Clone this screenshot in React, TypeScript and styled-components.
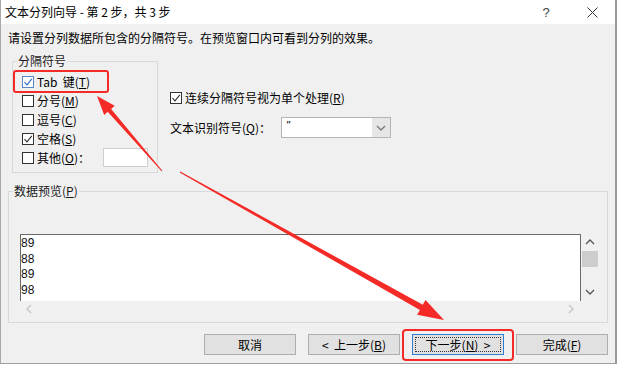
import React from "react"
import styled, { createGlobalStyle } from "styled-components"

const GlobalStyle = createGlobalStyle`
  html, body {
    margin: 0;
    padding: 0;
    background: #ffffff;
  }
  body {
    font-family: "Noto Sans CJK SC", "Liberation Sans", sans-serif;
    font-size: 12px;
    color: #000;
  }
`

const RED = "#f42a26"

type Pt = [number, number]

const arrowPoints = (from: Pt, to: Pt, w0: number, w1: number, headLen: number, headHalf: number) => {
  const dx = to[0] - from[0]
  const dy = to[1] - from[1]
  const len = Math.hypot(dx, dy)
  const ux = dx / len
  const uy = dy / len
  const nx = -uy
  const ny = ux
  const bx = to[0] - ux * headLen
  const by = to[1] - uy * headLen
  const pts: Pt[] = [
    [from[0] + (nx * w0) / 2, from[1] + (ny * w0) / 2],
    [bx + (nx * w1) / 2, by + (ny * w1) / 2],
    [bx + nx * headHalf, by + ny * headHalf],
    to,
    [bx - nx * headHalf, by - ny * headHalf],
    [bx - (nx * w1) / 2, by - (ny * w1) / 2],
    [from[0] - (nx * w0) / 2, from[1] - (ny * w0) / 2],
  ]
  return pts.map((p) => `${p[0].toFixed(1)},${p[1].toFixed(1)}`).join(" ")
}

const CheckBox: React.FC<{ checked?: boolean; accent?: boolean }> = ({ checked, accent }) => (
  <Box $accent={accent}>
    {checked && (
      <svg width="10" height="10" viewBox="0 0 10 10">
        <path d="M1.5 5.2 L4 7.8 L8.8 1.8" fill="none" stroke={accent ? "#2f6fd0" : "#333"} strokeWidth="1.1" />
      </svg>
    )}
  </Box>
)

const Chevron: React.FC<{ dir: "up" | "down" | "left" | "right"; color?: string }> = ({ dir, color = "#555" }) => {
  const d = {
    up: "M1 6 L5 2 L9 6",
    down: "M1 2 L5 6 L9 2",
    left: "M6 1 L2 5 L6 9",
    right: "M2 1 L6 5 L2 9",
  }[dir]
  const vertical = dir === "up" || dir === "down"
  return (
    <svg width={vertical ? 10 : 8} height={vertical ? 8 : 10} viewBox={vertical ? "0 0 10 8" : "0 0 8 10"}>
      <path d={d} fill="none" stroke={color} strokeWidth="1.3" />
    </svg>
  )
}

const separators = [
  { label: "分号", key: "M", checked: false },
  { label: "逗号", key: "C", checked: false },
  { label: "空格", key: "S", checked: true },
]

const previewRows = ["89", "88", "89", "98"]

const App: React.FC = () => {
  return (
    <>
      <GlobalStyle />
      <Window>
        <TitleBar>
          <TitleText>文本分列向导 - 第 2 步，共 3 步</TitleText>
          <TitleButton>?</TitleButton>
          <TitleButton>
            <svg width="11" height="11" viewBox="0 0 11 11">
              <path d="M0.5 0.5 L10.5 10.5 M10.5 0.5 L0.5 10.5" stroke="#333" strokeWidth="1" />
            </svg>
          </TitleButton>
        </TitleBar>

        <Body>
          <Instruction>请设置分列数据所包含的分隔符号。在预览窗口内可看到分列的效果。</Instruction>

          <TopRow>
            <SepGroup>
              <Legend>分隔符号</Legend>
              <GroupInner>
                <TabRow>
                  <Highlight $inset="-2px -19px -2px -9px" $radius={3} />
                  <CheckBox checked accent />
                  <span>
                    Tab&nbsp; 键(<U>T</U>)
                  </span>
                </TabRow>
                {separators.map((s) => (
                  <OptionRow key={s.key}>
                    <CheckBox checked={s.checked} />
                    <span>
                      {s.label}(<U>{s.key}</U>)
                    </span>
                  </OptionRow>
                ))}
                <OptionRow>
                  <CheckBox />
                  <span>
                    其他(<U>O</U>)：
                  </span>
                  <OtherInput />
                </OptionRow>
              </GroupInner>
            </SepGroup>

            <RightOptions>
              <OptionRow>
                <CheckBox checked />
                <span>
                  连续分隔符号视为单个处理(<U>R</U>)
                </span>
              </OptionRow>
              <QualifierRow>
                <QualifierLabel>
                  文本识别符号(<U>Q</U>)：
                </QualifierLabel>
                <Combo>
                  <ComboValue>"</ComboValue>
                  <ComboButton>
                    <Chevron dir="down" color="#777" />
                  </ComboButton>
                </Combo>
              </QualifierRow>
            </RightOptions>
          </TopRow>

          <PreviewGroup>
            <Legend>
              数据预览(<U>P</U>)
            </Legend>
            <PreviewInner>
              <PreviewFrame>
                <PreviewBox>
                  {previewRows.map((r, i) => (
                    <PreviewLine key={i}>{r}</PreviewLine>
                  ))}
                </PreviewBox>
                <VScroll>
                  <Chevron dir="up" />
                  <Thumb />
                  <Spacer />
                  <Chevron dir="down" />
                </VScroll>
                <HScroll>
                  <Chevron dir="left" color="#c4c4c4" />
                  <Chevron dir="right" color="#c4c4c4" />
                </HScroll>
              </PreviewFrame>
            </PreviewInner>
          </PreviewGroup>

          <ButtonRow>
            <Button>取消</Button>
            <Button>
              &lt;&nbsp; 上一步(<U>B</U>)
            </Button>
            <ButtonSlot>
              <Highlight $inset="-5px -10px -6px -10px" $radius={4} />
              <Button $focused>
                <FocusRing>
                  下一步(<U>N</U>)&nbsp; &gt;
                </FocusRing>
              </Button>
            </ButtonSlot>
            <Button>
              完成(<U>F</U>)
            </Button>
          </ButtonRow>
        </Body>

        <ArrowLayer width="620" height="367" viewBox="0 0 620 367">
          <polygon points={arrowPoints([162, 171], [97, 96], 1, 4.5, 19, 7)} fill={RED} />
          <polygon points={arrowPoints([180, 172], [444, 320], 1.2, 6, 26, 8.5)} fill={RED} />
        </ArrowLayer>
      </Window>
    </>
  )
}

const Window = styled.div`
  position: relative;
  width: 617px;
  height: 364px;
  box-sizing: border-box;
  background: #f0f0f0;
  border-left: 1px solid #a8a8a8;
  border-right: 2px solid #9a9a9a;
  border-bottom: 1px solid #a0a0a0;
  display: flex;
  flex-direction: column;
`

const TitleBar = styled.div`
  height: 24px;
  flex: none;
  display: flex;
  align-items: center;
  background: #ffffff;
  padding-left: 4px;
`

const TitleText = styled.div`
  flex: 1;
  font-size: 12px;
  line-height: 16px;
`

const TitleButton = styled.div`
  width: 46px;
  height: 24px;
  display: flex;
  align-items: center;
  justify-content: center;
  font-family: "Liberation Sans", sans-serif;
  font-size: 13px;
  color: #444;
`

const Body = styled.div`
  flex: 1;
  display: flex;
  flex-direction: column;
  padding: 6px 7px 0 7px;
`

const Instruction = styled.div`
  line-height: 16px;
  height: 16px;
`

const TopRow = styled.div`
  display: flex;
  margin-top: 7px;
`

const Group = styled.fieldset`
  margin: 0;
  padding: 0;
  border: 1px solid #d9d9d9;
  min-width: 0;
`

const SepGroup = styled(Group)`
  width: 146px;
  box-sizing: border-box;
  margin-left: 4px;
`

const Legend = styled.legend`
  margin-left: 4px;
  padding: 0 1px;
  line-height: 16px;
  color: #1a1a1a;
`

const GroupInner = styled.div`
  display: flex;
  flex-direction: column;
  padding: 3px 9px 5px 9px;
`

const OptionRow = styled.div`
  position: relative;
  display: flex;
  align-items: center;
  gap: 3px;
  height: 19px;
  line-height: 16px;
  white-space: nowrap;
`

const TabRow = styled(OptionRow)`
  align-self: flex-start;
`

const Box = styled.span<{ $accent?: boolean }>`
  width: 12px;
  height: 12px;
  box-sizing: border-box;
  flex: none;
  background: #fff;
  border: 1px solid ${(p) => (p.$accent ? "#5a86c8" : "#333")};
  display: flex;
  align-items: center;
  justify-content: center;
`

const U = styled.span`
  text-decoration: underline;
`

const OtherInput = styled.div`
  margin-left: auto;
  width: 45px;
  height: 19px;
  box-sizing: border-box;
  background: #fff;
  border: 1px solid #cfcfcf;
`

const Highlight = styled.div<{ $inset: string; $radius: number }>`
  position: absolute;
  inset: ${(p) => p.$inset};
  border: 2px solid ${RED};
  border-radius: ${(p) => p.$radius}px;
  pointer-events: none;
  z-index: 2;
`

const RightOptions = styled.div`
  display: flex;
  flex-direction: column;
  margin-left: 12px;
  padding-top: 35px;
  gap: 10px;
`

const QualifierRow = styled.div`
  display: flex;
  align-items: center;
  height: 21px;
`

const QualifierLabel = styled.span`
  width: 111px;
  line-height: 16px;
  white-space: nowrap;
`

const Combo = styled.div`
  width: 110px;
  height: 21px;
  box-sizing: border-box;
  display: flex;
  background: #fff;
  border: 1px solid #b4b4b4;
`

const ComboValue = styled.span`
  flex: 1;
  padding-left: 4px;
  font-family: "Liberation Sans", sans-serif;
  font-size: 11px;
  line-height: 14px;
  font-style: italic;
`

const ComboButton = styled.span`
  width: 18px;
  background: #e6e6e6;
  display: flex;
  align-items: center;
  justify-content: center;
`

const PreviewGroup = styled(Group)`
  margin-top: 10px;
`

const PreviewInner = styled.div`
  padding: 35px 10px 5px 11px;
`

const PreviewFrame = styled.div`
  display: grid;
  grid-template-columns: 561px 17px;
  grid-template-rows: 67px 16px;
`

const PreviewBox = styled.div`
  background: #fff;
  border: 1px solid #6a6a6a;
  border-bottom: none;
  padding-top: 1px;
  overflow: hidden;
`

const PreviewLine = styled.div`
  font-family: "Liberation Sans", sans-serif;
  font-size: 12px;
  line-height: 15.5px;
  color: #111;
`

const VScroll = styled.div`
  display: flex;
  flex-direction: column;
  align-items: center;
  padding: 4px 0 5px 1px;
`

const Thumb = styled.div`
  width: 16px;
  height: 16px;
  margin-top: 5px;
  background: #cdcdcd;
`

const Spacer = styled.div`
  flex: 1;
`

const HScroll = styled.div`
  display: flex;
  align-items: center;
  justify-content: space-between;
  padding: 0 6px 0 5px;
`

const ButtonRow = styled.div`
  display: flex;
  justify-content: flex-end;
  gap: 12px;
  margin-top: 11px;
`

const ButtonSlot = styled.div`
  position: relative;
  display: flex;
`

const Button = styled.div<{ $focused?: boolean }>`
  width: 92px;
  height: 21px;
  box-sizing: border-box;
  display: flex;
  align-items: center;
  justify-content: center;
  background: #e1e1e1;
  border: 1px solid ${(p) => (p.$focused ? "#2a7fd4" : "#adadad")};
  line-height: 16px;
  white-space: nowrap;
  padding: ${(p) => (p.$focused ? "2px" : "0")};
`

const FocusRing = styled.span`
  flex: 1;
  align-self: stretch;
  display: flex;
  align-items: center;
  justify-content: center;
  border: 1px dotted #333;
`

const ArrowLayer = styled.svg`
  position: absolute;
  left: -1px;
  top: 0;
  pointer-events: none;
  z-index: 3;
`

export default App
